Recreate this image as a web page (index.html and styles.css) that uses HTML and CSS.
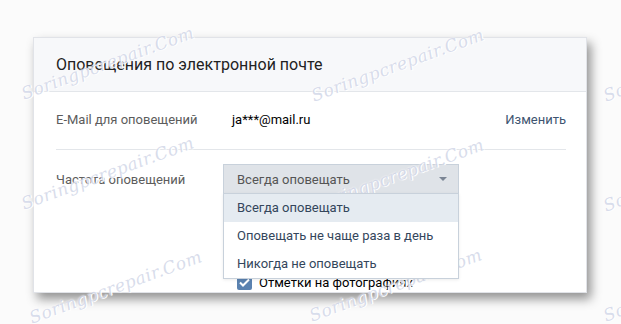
FILE: index.html
```html
<!DOCTYPE html>
<html lang="ru">
<head>
    <meta charset="UTF-8">
    <title>Оповещения по электронной почте</title>
    <link rel="stylesheet" href="styles.css">
</head>
<body>
    <div class="card">
        <div class="card-header">Оповещения по электронной почте</div>
        <div class="card-body">
            <div class="row row-email">
                <div class="label">E-Mail для оповещений</div>
                <div class="value">ja***@mail.ru</div>
                <a class="link">Изменить</a>
            </div>
            <div class="row row-freq">
                <div class="label">Частота оповещений</div>
                <div class="select-wrap">
                    <div class="select">
                        <span>Всегда оповещать</span>
                        <span class="arrow"></span>
                    </div>
                    <ul class="dropdown">
                        <li class="active">Всегда оповещать</li>
                        <li>Оповещать не чаще раза в день</li>
                        <li>Никогда не оповещать</li>
                    </ul>
                </div>
            </div>
            <div class="checks">
                <label class="check">
                    <span class="box">
                        <svg width="11" height="9" viewBox="0 0 11 9"><path d="M1 4.5 L4 7.5 L10 1.5" fill="none" stroke="#fff" stroke-width="2"/></svg>
                    </span>
                    Отметки на фотографиях
                </label>
            </div>
        </div>
    </div>

    <div class="watermarks">
        <span class="wm" style="left: 22px; top: 84px;">Soringpcrepair.Com</span>
        <span class="wm" style="left: 312px; top: 86px;">Soringpcrepair.Com</span>
        <span class="wm" style="left: 604px; top: 86px;">Soringpcrepair.Com</span>
        <span class="wm" style="left: 22px; top: 194px;">Soringpcrepair.Com</span>
        <span class="wm" style="left: 312px; top: 196px;">Soringpcrepair.Com</span>
        <span class="wm" style="left: 604px; top: 196px;">Soringpcrepair.Com</span>
        <span class="wm" style="left: 30px; top: 308px;">Soringpcrepair.Com</span>
        <span class="wm" style="left: 310px; top: 306px;">Soringpcrepair.Com</span>
        <span class="wm" style="left: 604px; top: 306px;">Soringpcrepair.Com</span>
    </div>
</body>
</html>
```

FILE: styles.css
```css
body {
    margin: 0;
    background-color: #fbfbfb;
    font-family: Roboto, "Liberation Sans", sans-serif;
    font-size: 13px;
    color: #000;
    height: 324px;
    overflow: hidden;
    position: relative;
}
.card {
    margin: 37px 0 0 33px;
    width: 552px;
    height: 254px;
    border: 1px solid #e1e3e8;
    background-color: #fff;
    box-shadow: 4px 6px 10px rgba(0, 0, 0, 0.42);
    overflow: hidden;
}
.card-header {
    height: 53px;
    line-height: 53px;
    padding-left: 22px;
    background-color: #f7f8fa;
    border-bottom: 1px solid #e3e6ea;
    font-size: 16px;
    color: #222;
}
.card-body {
    padding: 0 20px 0 22px;
}
.row {
    display: flex;
    align-items: center;
}
.row-email {
    padding: 19px 0 20px;
    line-height: 18px;
    border-bottom: 1px solid #e3e6ea;
}
.row-freq {
    padding-top: 14px;
}
.label {
    width: 167px;
    flex-shrink: 0;
    color: #5c5c5c;
}
.value {
    padding-left: 9px;
    flex: 1;
}
.link {
    color: #3e5470;
}
.select-wrap {
    position: relative;
    width: 236px;
}
.select {
    height: 28px;
    display: flex;
    align-items: center;
    justify-content: space-between;
    padding: 0 11px 0 13px;
    background-color: #dfe3e8;
    border: 1px solid #c8d1db;
    color: #555;
}
.arrow {
    width: 0;
    height: 0;
    border-left: 4px solid transparent;
    border-right: 4px solid transparent;
    border-top: 4px solid #7b8594;
}
.dropdown {
    position: absolute;
    top: 29px;
    left: 0;
    width: 234px;
    margin: 0;
    padding: 0;
    list-style: none;
    background-color: #fff;
    border: 1px solid #c8d1db;
    box-shadow: 0 1px 3px rgba(0, 0, 0, 0.08);
    z-index: 2;
}
.dropdown li {
    height: 28px;
    line-height: 28px;
    padding-left: 13px;
    color: #34465c;
}
.dropdown li.active {
    background-color: #e5ebf1;
}
.checks {
    padding: 80px 0 0 181px;
}
.check {
    display: flex;
    align-items: center;
    gap: 7px;
    line-height: 17px;
}
.box {
    width: 15px;
    height: 15px;
    border-radius: 2px;
    background-color: #5b82b0;
    display: flex;
    align-items: center;
    justify-content: center;
}
.watermarks {
    position: absolute;
    left: 0;
    top: 0;
    width: 621px;
    height: 324px;
    overflow: hidden;
    pointer-events: none;
}
.wm {
    position: absolute;
    font-family: "DejaVu Serif", serif;
    font-style: italic;
    font-size: 17px;
    letter-spacing: 0.5px;
    color: rgba(190, 198, 222, 0.6);
    text-shadow: 0 0 2px #fff, 1px 1px 0 #fff;
    transform: rotate(-20deg);
    transform-origin: left center;
    white-space: nowrap;
}
```
